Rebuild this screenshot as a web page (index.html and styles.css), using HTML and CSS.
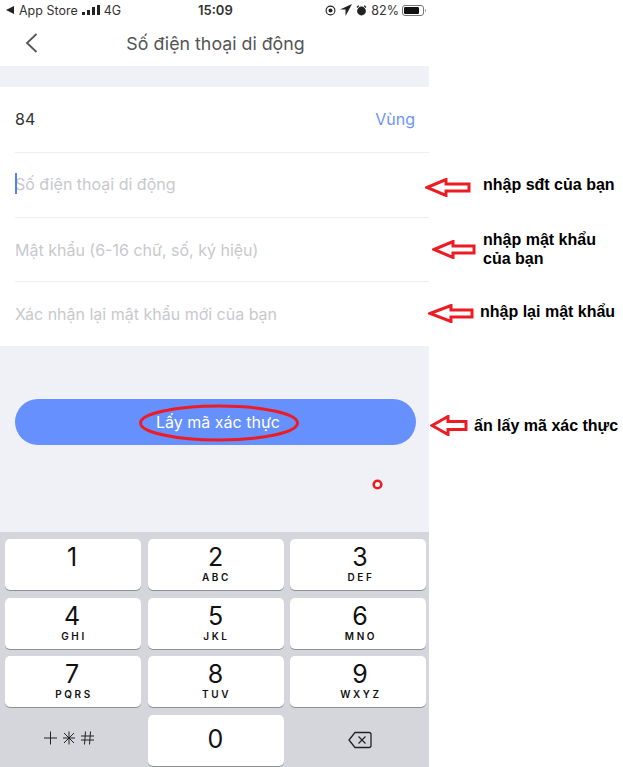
FILE: index.html
```html
<!DOCTYPE html>
<html lang="vi">
<head>
    <meta charset="UTF-8">
    <meta name="viewport" content="width=device-width, initial-scale=1.0">
    <title>Số điện thoại di động</title>
    <link rel="stylesheet" href="styles.css">
</head>
<body>
    <div id="phone">
        <div class="status-bar">
            <div class="status-left">
                <svg class="back-tri" width="8" height="8" viewBox="0 0 8 8"><path d="M0 4 8 0V8Z" fill="#222"/></svg>
                <span>App Store</span>
                <svg width="18" height="11" viewBox="0 0 18 11"><path d="M0 7h3v3H0zM5 5h3v5H5zM10 2h3v8h-3zM15 0h3v10h-3z" fill="#222"/></svg>
                <span>4G</span>
            </div>
            <div class="status-time">15:09</div>
            <div class="status-right">
                <svg width="11" height="11" viewBox="0 0 11 11"><circle cx="5.5" cy="5.5" r="4.4" fill="none" stroke="#222" stroke-width="1.1"/><circle cx="5.5" cy="5.5" r="2" fill="#222"/></svg>
                <svg width="12" height="12" viewBox="0 0 10 10"><path d="M10 0 0 4.6h4.6V10Z" fill="#222"/></svg>
                <svg width="11" height="11" viewBox="0 0 11 11"><circle cx="5.5" cy="6" r="4.4" fill="#222"/><path d="M1 2.5 2.8.6M10 2.5 8.2.6" stroke="#222" stroke-width="1.3"/></svg>
                <span class="percent">82%</span>
                <svg width="25" height="11" viewBox="0 0 25 11"><rect x=".5" y=".5" width="21" height="10" rx="2.5" fill="none" stroke="#777"/><rect x="2" y="2" width="15" height="7" rx="1.2" fill="#111"/><path d="M23 3.8c1 .3 1 3 0 3.4z" fill="#777"/></svg>
            </div>
        </div>

        <div class="nav-bar">
            <svg class="nav-back" width="13" height="20" viewBox="0 0 13 20"><path d="M11.5 1 2 10l9.5 9" fill="none" stroke="#555" stroke-width="1.8"/></svg>
            <h1>Số điện thoại di động</h1>
        </div>

        <div class="form-list">
            <div class="form-row">
                <span class="value">84</span>
                <span class="link">Vùng</span>
            </div>
            <div class="form-row">
                <span class="caret"></span>
                <span class="hint">Số điện thoại di động</span>
            </div>
            <div class="form-row">
                <span class="hint">Mật khẩu (6-16 chữ, số, ký hiệu)</span>
            </div>
            <div class="form-row">
                <span class="hint">Xác nhận lại mật khẩu mới của bạn</span>
            </div>
        </div>

        <div class="button-area">
            <button class="main-button" type="button">Lấy mã xác thực</button>
        </div>

        <div class="keyboard">
            <div class="key"><b>1</b></div>
            <div class="key"><b>2</b><small>ABC</small></div>
            <div class="key"><b>3</b><small>DEF</small></div>
            <div class="key"><b>4</b><small>GHI</small></div>
            <div class="key"><b>5</b><small>JKL</small></div>
            <div class="key"><b>6</b><small>MNO</small></div>
            <div class="key"><b>7</b><small>PQRS</small></div>
            <div class="key"><b>8</b><small>TUV</small></div>
            <div class="key"><b>9</b><small>WXYZ</small></div>
            <div class="key key-flat">
                <svg class="sym" width="52" height="14" viewBox="0 0 52 14"><path d="M1 7h13M7.500 .5v13M20 7h12M26 .5v13M21 2l10 10M31 2 21 12M38 5h13M38 9h13M42.500 .5l-1 13M47.500 .5l-1 13" fill="none" stroke="#222" stroke-width="1"/></svg>
            </div>
            <div class="key key-zero"><b>0</b></div>
            <div class="key key-flat">
                <svg width="24" height="18" viewBox="0 0 24 18"><path d="M7 1.500h14a2 2 0 0 1 2 2v11a2 2 0 0 1-2 2H7L1 9Z" fill="none" stroke="#222" stroke-width="1.300" stroke-linejoin="round"/><path d="M10.500 5.500l7 7M17.500 5.500l-7 7" stroke="#222" stroke-width="1.200"/></svg>
            </div>
        </div>
    </div>

    <!-- red notes drawn over the screenshot -->
    <svg class="mark mark-phone" width="46" height="19" viewBox="0 0 46 19"><path d="M2 9.500 21 1.500v4.500h23v7H21v4.500Z" fill="#fff" stroke="#ed1c24" stroke-width="3"/></svg>
    <svg class="mark mark-pass" width="44" height="19" viewBox="0 0 44 19"><path d="M2 9.500 21 1.500v4.500h21v7H21v4.500Z" fill="#fff" stroke="#ed1c24" stroke-width="3"/></svg>
    <svg class="mark mark-again" width="46" height="19" viewBox="0 0 46 19"><path d="M2 9.500 23 1.500v4.500h21v7H23v4.500Z" fill="#fff" stroke="#ed1c24" stroke-width="3"/></svg>
    <svg class="mark mark-code" width="38" height="21" viewBox="0 0 38 21"><path d="M2 10.500 18 1.500v5h18v8H18v5Z" fill="#fff" stroke="#ed1c24" stroke-width="3"/></svg>
    <svg class="mark mark-oval" width="160" height="38" viewBox="0 0 160 38"><ellipse cx="80" cy="19" rx="78.500" ry="17" fill="none" stroke="#ed1c24" stroke-width="3"/></svg>
    <svg class="mark mark-dot" width="11" height="11" viewBox="0 0 11 11"><circle cx="5.500" cy="5.500" r="3.800" fill="#fff" stroke="#ed1c24" stroke-width="2.600"/></svg>

    <p class="note note-phone">nhập sđt của bạn</p>
    <p class="note note-pass">nhập mật khẩu<br>của bạn</p>
    <p class="note note-again">nhập lại mật khẩu</p>
    <p class="note note-code">ấn lấy mã xác thực</p>
</body>
</html>
```

FILE: styles.css
```css
html, body {
    margin: 0;
    padding: 0;
}

body {
    position: relative;
    width: 623px;
    height: 767px;
    overflow: hidden;
    background-color: #ffffff;
    font-family: Inter, "Liberation Sans", sans-serif;
}

#phone {
    display: flex;
    flex-direction: column;
    width: 429px;
    height: 767px;
    background-color: #f0f1f6;
}

/* status bar */
.status-bar {
    display: flex;
    justify-content: space-between;
    align-items: center;
    position: relative;
    height: 20px;
    padding: 0 2px 0 6px;
    background-color: #ffffff;
    color: #333333;
    font-size: 12.5px;
}

.status-left,
.status-right {
    display: flex;
    align-items: center;
    gap: 4px;
}

.back-tri {
    margin-right: 1px;
}

.percent {
    margin-right: -1px;
}

.status-time {
    position: absolute;
    left: 198px;
    font-weight: 600;
    font-size: 13px;
}

/* nav */
.nav-bar {
    display: flex;
    justify-content: center;
    align-items: center;
    position: relative;
    height: 46px;
    padding-left: 2px;
    background-color: #ffffff;
}

.nav-bar h1 {
    margin: 0;
    font-size: 17.800px;
    font-weight: 400;
    color: #555555;
}

.nav-back {
    position: absolute;
    left: 25px;
    top: 13px;
}

/* form */
.form-list {
    margin-top: 21px;
    padding-left: 15px;
    background-color: #ffffff;
}

.form-row {
    display: flex;
    justify-content: space-between;
    align-items: center;
    position: relative;
    box-sizing: border-box;
    height: 64px;
    padding-right: 14px;
    border-bottom: 1px solid #eeeeef;
    font-size: 16px;
}

.form-row:nth-child(1) {
    height: 66px;
    padding-bottom: 1px;
}

.form-row:nth-child(2) {
    height: 65px;
    padding-bottom: 2px;
}

.form-row:last-child {
    border-bottom: none;
}

.value {
    color: #333333;
}

.link {
    color: #6c94f5;
}

.hint {
    color: #c8c9cc;
}

.caret {
    position: absolute;
    left: 0;
    top: 20px;
    width: 2px;
    height: 21px;
    background-color: #5b7ff0;
}

.button-area {
    flex: 1;
    padding: 53px 13px 0 15px;
}

.main-button {
    display: block;
    width: 100%;
    height: 46px;
    padding-left: 11px;
    border: none;
    border-radius: 23px;
    background-color: #6690fd;
    color: #ffffff;
    font-family: inherit;
    font-size: 16px;
}

/* keyboard */
.keyboard {
    display: grid;
    grid-template-columns: 136px 136px 136px;
    grid-auto-rows: 51px;
    column-gap: 6.500px;
    row-gap: 7.500px;
    height: 235px;
    box-sizing: border-box;
    padding: 7px 3px 0 5px;
    background-color: #d4d6db;
}

.key {
    display: flex;
    flex-direction: column;
    align-items: center;
    border-radius: 5px;
    background-color: #ffffff;
    box-shadow: 0 1px 0 #8e9094;
    color: #111111;
}

.key:nth-child(3n) {
    padding-left: 4px;
    box-sizing: border-box;
}

.key:nth-child(3n+1) b {
    margin-right: 2px;
}

.key b {
    margin-top: 5px;
    font-size: 25px;
    line-height: 27px;
    font-weight: 400;
}

.key small {
    padding-left: 2px;
    font-size: 10px;
    line-height: 12px;
    font-weight: 600;
    letter-spacing: 2.600px;
}

.key-zero b {
    margin-top: 11px;
}

.key-flat {
    justify-content: center;
    background-color: transparent;
    box-shadow: none;
}

.sym {
    margin: 0 8px 5px 0;
}

/* notes */
.mark {
    position: absolute;
}

.mark-phone { left: 425px; top: 178px; }
.mark-pass { left: 432px; top: 240px; }
.mark-again { left: 428px; top: 304px; }
.mark-code { left: 430px; top: 415px; }
.mark-oval { left: 139px; top: 404px; }
.mark-dot { left: 372px; top: 479px; }

.note {
    position: absolute;
    margin: 0;
    font-family: "Liberation Sans", Arial, sans-serif;
    font-size: 16px;
    line-height: 19px;
    font-weight: 700;
    color: #000000;
}

.note-phone { left: 483px; top: 175px; }
.note-pass { left: 483px; top: 230px; }
.note-again { left: 480px; top: 302px; }
.note-code { left: 474px; top: 416px; }
```
